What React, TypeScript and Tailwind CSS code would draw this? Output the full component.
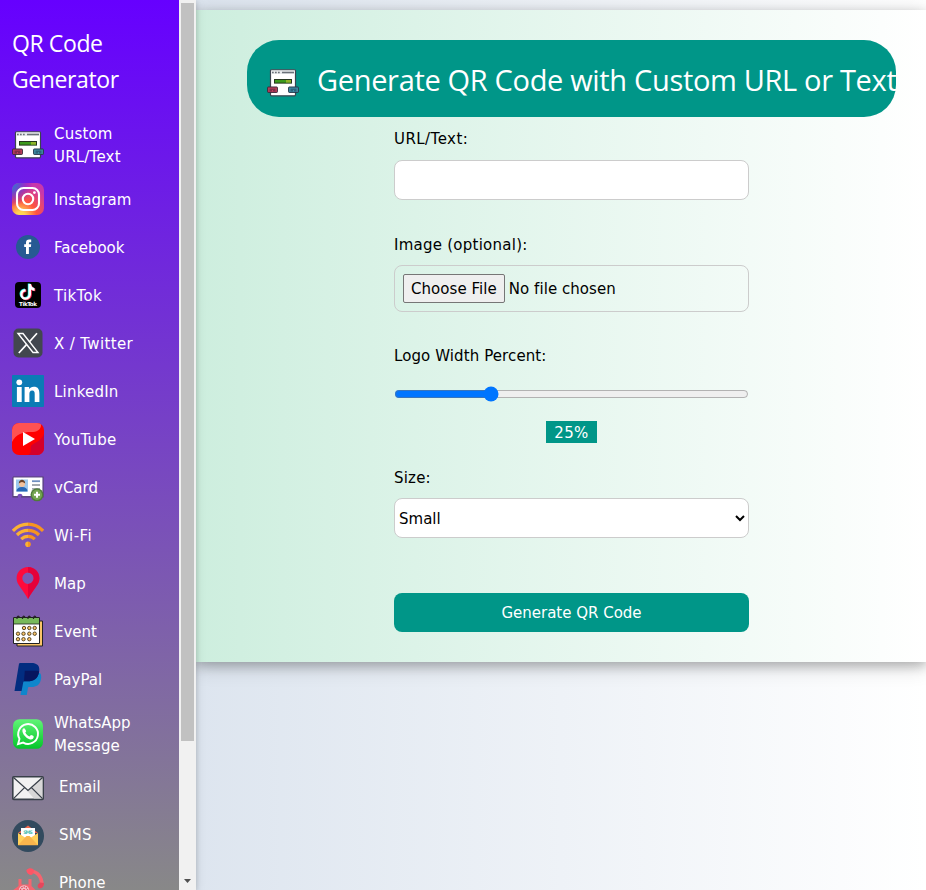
import React from "react";

const svgProps = { width: 32, height: 32, viewBox: "0 0 32 32", className: "block shrink-0" };

function UrlIcon() {
  return (
    <svg {...svgProps}>
      <rect x="3.5" y="2.8" width="25" height="26" rx="1" fill="#fff" stroke="#3c4450" strokeWidth="1.2" />
      <rect x="4.2" y="3.4" width="23.6" height="3.6" fill="#e6e9eb" />
      <path d="M5 5.500h1.700M8 5.500h1.700M11 5.500h1.700M15 5.500h12" stroke="#6a7078" strokeWidth="1.400" />
      <rect x="7.500" y="12.500" width="17" height="3.600" fill="#3c9a1c" stroke="#26361f" />
      <rect x="19" y="13" width="5" height="2.600" fill="#8fb32a" />
      <rect x="0.600" y="20" width="9.800" height="5.400" rx="0.600" fill="#c2405c" stroke="#3a2a3c" />
      <path d="M2.500 22.200h6M2.500 23.800h2.500M6 23.800h2.500" stroke="#4a2038" strokeWidth="0.800" />
      <rect x="21.600" y="20" width="9.800" height="5.400" rx="0.600" fill="#3f8fa8" stroke="#25384a" />
      <path d="M23.500 22.200h6M23.500 23.800h2.500M27 23.800h2.500" stroke="#1d3f57" strokeWidth="0.800" />
    </svg>
  );
}

function InstagramIcon() {
  return (
    <svg {...svgProps}>
      <defs>
        <radialGradient id="igWarm" cx="0.27" cy="1.05" r="1">
          <stop offset="0" stopColor="#ffdd55" />
          <stop offset="0.15" stopColor="#ffd253" />
          <stop offset="0.5" stopColor="#ff543e" />
          <stop offset="1" stopColor="#c837ab" />
        </radialGradient>
        <radialGradient id="igCool" cx="-0.1" cy="0" r="0.75">
          <stop offset="0" stopColor="#3771c8" />
          <stop offset="0.3" stopColor="#4a62cf" />
          <stop offset="1" stopColor="#6600ff" stopOpacity="0" />
        </radialGradient>
      </defs>
      <rect width="32" height="32" rx="7" fill="url(#igWarm)" />
      <rect width="32" height="32" rx="7" fill="url(#igCool)" />
      <rect x="5" y="5" width="22" height="22" rx="6.500" fill="none" stroke="#fff" strokeWidth="2.100" />
      <circle cx="16" cy="16" r="5.200" fill="none" stroke="#fff" strokeWidth="2.100" />
      <circle cx="22.400" cy="9.600" r="1.400" fill="#fff" />
    </svg>
  );
}

function FacebookIcon() {
  return (
    <svg {...svgProps}>
      <circle cx="16" cy="16" r="12" fill="#265a93" />
      <path d="M14 23v-7h-1.800v-2.700H14v-1.500c0-2.100 1.100-3.200 3.200-3.200h2v2.600h-1.200c-.8 0-1.100.300-1.100 1v1.100h2.300l-.3 2.700h-2V23z" fill="#fff" />
    </svg>
  );
}

function TikTokIcon() {
  const note = "M16.500 4v10.500a3 3 0 1 1-3-3v-2.600a5.400 5.400 0 1 0 5.500 5.400V9.500c1 .8 2.200 1.200 3.500 1.200V8.100c-2-.1-3.400-1.800-3.500-4.100z";
  return (
    <svg {...svgProps}>
      <rect x="3" y="3" width="26" height="26" rx="4" fill="#000" />
      <g transform="translate(0 1)">
        <path d={note} fill="#25f4ee" transform="translate(-.7 -.5)" />
        <path d={note} fill="#fe2c55" transform="translate(.8 .5)" />
        <path d={note} fill="#fff" />
      </g>
      <text x="16" y="27" textAnchor="middle" fill="#fff" fontSize="5.600" fontWeight="700" fontFamily="DejaVu Sans, sans-serif" textLength="18">TikTok</text>
    </svg>
  );
}

function XIcon() {
  return (
    <svg {...svgProps}>
      <rect x="1.500" y="1.500" width="29" height="29" rx="5" fill="#42474f" />
      <path d="M6 6.500h5L26 25.500h-5z" fill="none" stroke="#fff" strokeWidth="1.400" />
      <path d="M25 6.200 17.200 15M14.500 17.600 6.800 26" stroke="#fff" strokeWidth="1.700" />
    </svg>
  );
}

function LinkedInIcon() {
  return (
    <svg {...svgProps}>
      <rect width="32" height="32" rx="1" fill="#0b7bb5" />
      <circle cx="7.300" cy="7.300" r="2.900" fill="#fff" />
      <path d="M4.900 12h4.800v15H4.900zM12.600 12h4.500v2.100c.8-1.400 2.500-2.400 4.600-2.400 4.500 0 5.700 2.700 5.700 7V27h-4.700v-7.600c0-2-.2-3.800-2.500-3.800-2.400 0-2.800 1.800-2.800 3.700V27h-4.800z" fill="#fff" />
    </svg>
  );
}

function YouTubeIcon() {
  return (
    <svg {...svgProps}>
      <defs>
        <clipPath id="ytClip"><rect width="32" height="32" rx="7" /></clipPath>
      </defs>
      <g clipPath="url(#ytClip)">
        <rect width="32" height="32" fill="#ff0000" />
        <path d="M0 0h29v3c-1 4-4 6-10 6C11 9 4 11 0 19z" fill="#ff5252" />
        <path d="M32 11v21H16c4-2 2-6 3-9s9-3 13-12z" fill="#d4002b" />
        <path d="M11 9v14l12-7z" fill="#fff" />
      </g>
    </svg>
  );
}

function VCardIcon() {
  return (
    <svg {...svgProps}>
      <path d="M1 6.200h30v19.600h-3M1 6.200v19.600h5M9 25.800h10" fill="none" stroke="#54456f" strokeWidth="1.200" />
      <path d="M1.600 6.600h28.800v18.400H10.500c0-3-5-3-5 0H1.600z" fill="#fff" />
      <rect x="4" y="8.500" width="12" height="12" fill="#9cc8ee" />
      <path d="M4.500 20.500c0-3 2-4.500 5.500-4.500s5.500 1.500 5.500 4.500z" fill="#2667b5" />
      <circle cx="10" cy="12.800" r="3.100" fill="#f2c29c" />
      <path d="M6.800 12.500c0-5 6.400-5 6.400 0-2-2-4.400-2-6.400 0z" fill="#6b4327" />
      <path d="M20 10.200h8" stroke="#6f8fc0" strokeWidth="1.800" />
      <path d="M20 14h8M20 17.800h8" stroke="#a4a9b0" strokeWidth="1.800" />
      <circle cx="25" cy="23.800" r="6.500" fill="#4f7b3a" />
      <circle cx="25" cy="23.800" r="5.100" fill="#74a551" />
      <path d="M25 20.800v6M22 23.800h6" stroke="#fff" strokeWidth="2" />
    </svg>
  );
}

function WifiIcon() {
  return (
    <svg {...svgProps}>
      <defs>
        <linearGradient id="wifiTone" gradientUnits="userSpaceOnUse" x1="0" y1="0" x2="32" y2="0">
          <stop offset="0.5" stopColor="#fbb133" />
          <stop offset="0.5" stopColor="#f79420" />
        </linearGradient>
      </defs>
      <g fill="none" stroke="url(#wifiTone)" strokeWidth="3.200">
        <path d="M.9 11.800C9.400 3 22.600 3 31.100 11.800" />
        <path d="M5 16c6.300-6.200 15.700-6.200 22 0" />
        <path d="M9.200 20.200c4-3.900 9.600-3.900 13.600 0" />
      </g>
      <circle cx="16" cy="25.200" r="2.800" fill="url(#wifiTone)" />
    </svg>
  );
}

function MapIcon() {
  return (
    <svg {...svgProps}>
      <path fillRule="evenodd" d="M16 0C9.500 0 4.600 5 4.600 11.200 4.600 18 10.700 21.700 16 32c5.300-10.300 11.400-14 11.400-20.800C27.400 5 22.500 0 16 0zm0 5.600a5.700 5.700 0 1 1 0 11.400 5.700 5.700 0 0 1 0-11.400z" fill="#ff0a3c" />
      <path d="M16 0v5.600a5.700 5.700 0 1 1 0 11.400v15c5.300-10.300 11.400-14 11.400-20.800C27.400 5 22.500 0 16 0z" fill="#e4003a" />
    </svg>
  );
}

const eventDots = [
  [12, 13], [17.300, 13], [22.700, 13],
  [6, 18.700], [11.500, 18.700], [17.300, 18.700], [22.700, 18.700],
  [6, 24.200], [11.500, 24.200], [17.300, 24.200],
];

function EventIcon() {
  return (
    <svg {...svgProps}>
      <path d="M5 6h25.500v25H5z" fill="#f9c468" stroke="#222" />
      <path d="M1.500 2.500h26v26h-26z" fill="#fff" stroke="#222" />
      <path d="M2 3h25v6H2z" fill="#78b95b" />
      <path d="M1.500 9h26" stroke="#222" strokeWidth="0.800" />
      <path d="M5 4c-.5-3 2-4 2.500-1M10.500 4c-.5-3 2-4 2.500-1M16 4c-.5-3 2-4 2.500-1M21.500 4c-.5-3 2-4 2.500-1" fill="none" stroke="#222" strokeWidth="1.200" />
      {eventDots.map(([x, y]) => (
        <circle key={`${x}-${y}`} cx={x} cy={y} r="1.700" fill="#f9c468" stroke="#4a3a1c" strokeWidth="0.900" />
      ))}
    </svg>
  );
}

function PayPalIcon() {
  return (
    <svg {...svgProps}>
      <path d="M12 10h16c1.500 2 1.400 4.500.8 7-1.200 5-4.500 7-9.400 7h-2.200c-.8 0-1.200.5-1.300 1.200L14.800 32H8.500z" fill="#0f86cc" />
      <path d="M7 .8C7.200.3 7.600 0 8.200 0H19c6 0 9.300 2.600 8.100 9-1.200 6.800-5.300 9.300-11.600 9.300h-2.700c-.9 0-1.400.5-1.600 1.300L9.600 28H2.500z" fill="#022d80" />
      <path d="M12.800 7.800h11.800c1 0 1.700.200 2.500.7-1.100 7-5.200 9.800-11.600 9.800h-3.500z" fill="#07165f" />
    </svg>
  );
}

function WhatsAppIcon() {
  return (
    <svg {...svgProps}>
      <defs>
        <linearGradient id="waGreen" x1="0" y1="0" x2="0" y2="1">
          <stop offset="0" stopColor="#61f577" />
          <stop offset="1" stopColor="#04c52a" />
        </linearGradient>
      </defs>
      <rect x="1" y="1.200" width="30" height="29.600" rx="6.500" fill="url(#waGreen)" />
      <path d="M6 26.200l1.500-5.300a9.900 9.900 0 1 1 3.700 3.700z" fill="none" stroke="#fff" strokeWidth="1.900" />
      <path d="M12.900 10.700c-.4-.8-1.500-.7-2 .1-2 3 2.200 9.200 6.600 10.400 2.500.7 4.200-.5 4.200-2.500 0-.6-2.400-1.900-3-1.500l-1.200 1.300c-2.100-.8-3.300-2.100-4.200-3.900l.9-1.300z" fill="#fff" />
    </svg>
  );
}

function EmailIcon() {
  return (
    <svg {...svgProps}>
      <rect x=".8" y="4.800" width="30.400" height="22.600" rx="1" fill="#f2f2f2" stroke="#394049" strokeWidth="1.600" />
      <path d="M16 18 30.400 5.500V26.600H22L14.500 18z" fill="#d8d8d8" />
      <path d="M1.500 5.500 16 18.500 30.500 5.500M1.500 26.600l11-11M30.500 26.600l-11-11" fill="none" stroke="#394049" strokeWidth="1.300" />
    </svg>
  );
}

function SmsIcon() {
  return (
    <svg {...svgProps}>
      <circle cx="16" cy="16" r="16" fill="#324a5e" />
      <path d="M6 13 16 5.500l10 7.500z" fill="#f2674a" />
      <path d="M9 8h14v10H9z" fill="#fff" />
      <path d="M6 13l7 4.500h6l7-4.500v12H6z" fill="#ffd05b" />
      <path d="M6 25.200 14.500 16h3L26 25.200z" fill="#f9b54c" />
      <text x="16" y="13.600" textAnchor="middle" fill="#4cbfb0" fontSize="4.800" fontWeight="700" fontFamily="DejaVu Sans, sans-serif" textLength="9.500">SMS</text>
    </svg>
  );
}

function PhoneIcon() {
  return (
    <svg {...svgProps}>
      <path d="M18 3.200C25.500 3 30 9 30 17.500" fill="none" stroke="#f5646f" strokeWidth="3.600" />
      <path d="M14.500 2C17-.8 21 0 22 2.500L20.500 6.500C17.500 8 14 5 14.500 2z" fill="#ff5465" />
      <path d="M28 14.500 32 15c.3 3-2 5.800-4.500 5.500-2.200-.5-2-3-1.500-4z" fill="#e5475c" />
      <path d="M6.500 18v-7h3v5.500h7V11h3v7l5 5v9H0V23z" fill="#f5646f" />
      <circle cx="12" cy="22.500" r="5.200" fill="#f4c0c6" />
      <circle cx="12" cy="22.500" r="3.600" fill="none" stroke="#d9475b" strokeWidth="1.300" strokeDasharray="1.300 1" />
      <circle cx="12" cy="22.500" r="1.400" fill="#ef4d60" />
    </svg>
  );
}

type Item = { icon: () => React.ReactElement; lines: string[]; raised?: boolean; tracking?: string };

const items: Item[] = [
  { icon: UrlIcon, lines: ["Custom", "URL/Text"], tracking: "tracking-[0.2px]" },
  { icon: InstagramIcon, lines: ["Instagram"], tracking: "tracking-[0.13px]" },
  { icon: FacebookIcon, lines: ["Facebook"] },
  { icon: TikTokIcon, lines: ["TikTok"], tracking: "tracking-[0.35px]" },
  { icon: XIcon, lines: ["X / Twitter"], tracking: "tracking-[0.35px]" },
  { icon: LinkedInIcon, lines: ["LinkedIn"], tracking: "tracking-[0.2px]" },
  { icon: YouTubeIcon, lines: ["YouTube"], tracking: "tracking-[0.2px]" },
  { icon: VCardIcon, lines: ["vCard"] },
  { icon: WifiIcon, lines: ["Wi-Fi"], tracking: "tracking-[0.5px]" },
  { icon: MapIcon, lines: ["Map"] },
  { icon: EventIcon, lines: ["Event"] },
  { icon: PayPalIcon, lines: ["PayPal"] },
  { icon: WhatsAppIcon, lines: ["WhatsApp", "Message"] },
  { icon: EmailIcon, lines: ["Email"], raised: true },
  { icon: SmsIcon, lines: ["SMS"], raised: true, tracking: "tracking-[0.3px]" },
  { icon: PhoneIcon, lines: ["Phone"], raised: true },
];

function Sidebar() {
  return (
    <aside className="z-10 flex h-full w-[196px] shrink-0 shadow-[0_2px_5px_0_rgba(0,0,0,0.16),0_2px_10px_0_rgba(0,0,0,0.12)]">
      <nav className="h-full w-[179px] overflow-hidden bg-linear-to-b/srgb from-[#6600ff] to-[#888888] text-white">
        <h3 className="h-[114px] pt-[25px] pl-3 font-['Open_Sans',sans-serif] text-[23px] leading-9 tracking-[-0.4px]">
          QR Code
          <br />
          Generator
        </h3>
        {items.map(({ icon: Icon, lines, raised, tracking }) => (
          <div key={lines[0]} className={lines.length > 1 ? "flex h-[61px] items-center pl-3" : "flex h-12 items-center pl-3"}>
            <Icon />
            <div className={raised ? "ml-[15px] pb-px leading-[23px]" : "ml-2.5 pt-0.5 leading-[23px]"}>
              {lines.map((line) => (
                <div key={line} className={`whitespace-nowrap ${tracking ?? ""}`}>{line}</div>
              ))}
            </div>
          </div>
        ))}
      </nav>
      <div className="flex w-[17px] flex-col items-center justify-between bg-[#f1f1f1] pt-[3px] pb-[7px]">
        <div className="h-[738px] w-[13px] bg-[#c1c1c1]" />
        <svg width="7" height="4" viewBox="0 0 7 4" className="block">
          <path d="M0 0h7L3.500 4z" fill="#505050" />
        </svg>
      </div>
    </aside>
  );
}

export default function App() {
  return (
    <div className="flex h-[890px] w-[926px] overflow-hidden bg-white font-['DejaVu_Sans',Verdana,sans-serif] text-[15px] text-black">
      <Sidebar />
      <main className="h-full w-[730px] bg-linear-to-r/srgb from-[#dde5ef] to-white pt-2.5">
        <section className="flex h-[652px] flex-col items-center bg-linear-to-r/srgb from-[#cdeede] to-white pt-[30px] pr-[30px] pl-[51px] shadow-[0_4px_10px_0_rgba(0,0,0,0.2),0_4px_20px_0_rgba(0,0,0,0.19)]">
          <header className="flex h-[77px] w-[649px] shrink-0 items-center rounded-[32px] bg-[#009688] pl-5 text-white">
            <div className="pt-2"><UrlIcon /></div>
            <h2 className="ml-[18px] pt-px font-['Open_Sans',sans-serif] text-[29px] leading-[45px] whitespace-nowrap tracking-[-0.33px]">
              Generate QR Code with Custom URL or Text
            </h2>
          </header>
          <form className="flex w-[355px] flex-col">
            <label className="mt-[11px] h-[23px] leading-[23px] tracking-[0.45px]">URL/Text:</label>
            <input type="text" className="mt-[9px] h-10 rounded-lg border border-[#ccc] bg-white px-2" />
            <label className="mt-[34px] h-[23px] leading-[23px] tracking-[0.25px]">Image (optional):</label>
            <input
              type="file"
              className="mt-2 h-[47px] rounded-lg border border-[#ccc] px-2 pt-2 pb-1.5 tracking-[0.05px] file:mr-1 file:h-[29px] file:rounded-[2px] file:border file:border-[#767676] file:bg-[#efefef] file:px-[7px] file:pt-px file:text-black"
            />
            <label className="mt-[33px] h-[23px] leading-[23px] tracking-[0.1px]">Logo Width Percent:</label>
            <input type="range" min="0" max="95" defaultValue="25" className="mt-[18px] h-4 w-[355px]" />
            <output className="mt-[19px] h-[22px] w-[51px] self-center bg-[#009688] pt-px text-center leading-[23px] tracking-[0.4px] text-white">25%</output>
            <label className="mt-6 h-[23px] leading-[23px] tracking-[0.2px]">Size:</label>
            <select className="mt-2 h-10 rounded-lg border border-[#ccc] bg-white pt-0.5">
              <option>Small</option>
              <option>Medium</option>
              <option>Large</option>
            </select>
            <button type="button" className="mt-[55px] h-[39px] rounded-lg bg-[#009688] pt-0.5 text-white">
              Generate QR Code
            </button>
          </form>
        </section>
      </main>
    </div>
  );
}
